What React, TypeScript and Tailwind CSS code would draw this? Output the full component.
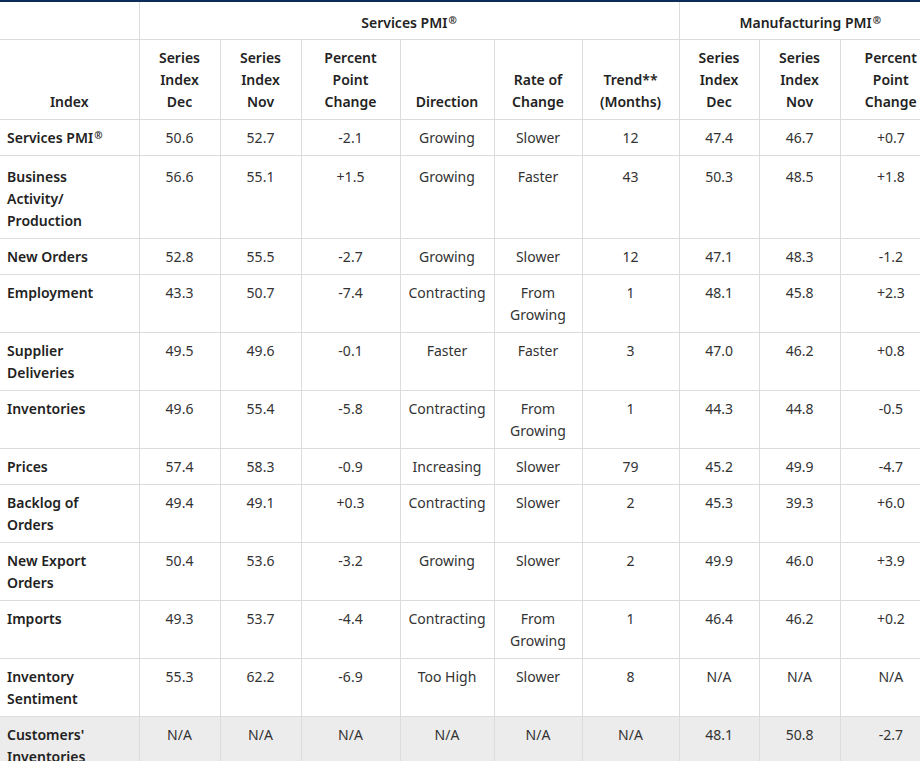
import React from 'react';

type Row = {
  label: React.ReactNode;
  cells: React.ReactNode[];
  shaded?: boolean;
  tall?: boolean;
};

const br = (a: string, b: string) => (
  <>
    {a}
    <br />
    {b}
  </>
);

const Reg = () => (
  <sup className="relative -top-[4px] ml-[1px] text-[10px] font-bold leading-[0]">®</sup>
);

const fromGrowing = br('From', 'Growing');

const rows: Row[] = [
  {
    label: (
      <>
        Services PMI<Reg />
      </>
    ),
    cells: ['50.6', '52.7', '-2.1', 'Growing', 'Slower', '12', '47.4', '46.7', '+0.7'],
  },
  {
    label: (
      <>
        Business
        <br />
        Activity/
        <br />
        Production
      </>
    ),
    cells: ['56.6', '55.1', '+1.5', 'Growing', 'Faster', '43', '50.3', '48.5', '+1.8'],
    tall: true,
  },
  { label: 'New Orders', cells: ['52.8', '55.5', '-2.7', 'Growing', 'Slower', '12', '47.1', '48.3', '-1.2'] },
  { label: 'Employment', cells: ['43.3', '50.7', '-7.4', 'Contracting', fromGrowing, '1', '48.1', '45.8', '+2.3'] },
  { label: br('Supplier', 'Deliveries'), cells: ['49.5', '49.6', '-0.1', 'Faster', 'Faster', '3', '47.0', '46.2', '+0.8'] },
  { label: 'Inventories', cells: ['49.6', '55.4', '-5.8', 'Contracting', fromGrowing, '1', '44.3', '44.8', '-0.5'] },
  { label: 'Prices', cells: ['57.4', '58.3', '-0.9', 'Increasing', 'Slower', '79', '45.2', '49.9', '-4.7'] },
  { label: br('Backlog of', 'Orders'), cells: ['49.4', '49.1', '+0.3', 'Contracting', 'Slower', '2', '45.3', '39.3', '+6.0'] },
  { label: br('New Export', 'Orders'), cells: ['50.4', '53.6', '-3.2', 'Growing', 'Slower', '2', '49.9', '46.0', '+3.9'] },
  { label: 'Imports', cells: ['49.3', '53.7', '-4.4', 'Contracting', fromGrowing, '1', '46.4', '46.2', '+0.2'] },
  { label: br('Inventory', 'Sentiment'), cells: ['55.3', '62.2', '-6.9', 'Too High', 'Slower', '8', 'N/A', 'N/A', 'N/A'] },
  {
    label: br("Customers'", 'Inventories'),
    cells: ['N/A', 'N/A', 'N/A', 'N/A', 'N/A', 'N/A', '48.1', '50.8', '-2.7'],
    shaded: true,
  },
];

const widths = [139, 81, 81, 99, 94, 88, 97, 80, 81, 101];

const subHeads: React.ReactNode[] = [
  <>Series<br />Index<br />Dec</>,
  <>Series<br />Index<br />Nov</>,
  <>Percent<br />Point<br />Change</>,
  'Direction',
  <>Rate of<br />Change</>,
  <>Trend**<br />(Months)</>,
  <>Series<br />Index<br />Dec</>,
  <>Series<br />Index<br />Nov</>,
  <>Percent<br />Point<br />Change</>,
];

export default function App() {
  return (
    <div
      className="w-[920px] h-[761px] overflow-hidden bg-white text-[14px] leading-[22px] text-[#333]"
      style={{ fontFamily: '"Noto Sans", "Open Sans", Arial, sans-serif' }}
    >
      <div className="w-[941px] border-t-2 border-[#0b2c57]">
        <table className="w-[941px] table-fixed border-collapse">
          <colgroup>
            {widths.map((w, i) => (
              <col key={i} style={{ width: w }} />
            ))}
          </colgroup>
          <thead>
            <tr>
              <th className="border-b border-[#dcdcdc] pt-[10px] pb-[5px]" />
              <th
                colSpan={6}
                className="border-b border-l border-[#dcdcdc] pt-[10px] pb-[5px] text-center font-semibold text-[#222]"
              >
                Services PMI<Reg />
              </th>
              <th
                colSpan={3}
                className="border-b border-l border-[#dcdcdc] pt-[10px] pb-[5px] text-center font-semibold text-[#222]"
              >
                Manufacturing PMI<Reg />
              </th>
            </tr>
            <tr>
              <th className="border-b border-[#dcdcdc] px-[7px] pt-[7px] pb-[6px] align-bottom text-center font-semibold text-[#222]">
                Index
              </th>
              {subHeads.map((h, i) => (
                <th
                  key={i}
                  className="border-b border-l border-[#dcdcdc] px-[4px] pt-[7px] pb-[6px] align-bottom text-center font-semibold text-[#222]"
                >
                  {h}
                </th>
              ))}
            </tr>
          </thead>
          <tbody>
            {rows.map((r, i) => {
              const pad = r.tall ? 'pt-[10px] pb-[6px]' : 'pt-[7px] pb-[6px]';
              return (
                <tr key={i} className={r.shaded ? 'bg-[#ececec]' : ''}>
                  <td
                    className={`border-b border-[#dcdcdc] pl-[7px] pr-[4px] align-top text-left font-semibold text-[#222] ${pad}`}
                  >
                    {r.label}
                  </td>
                  {r.cells.map((c, j) => (
                    <td
                      key={j}
                      className={`border-b border-l border-[#dcdcdc] px-[4px] align-top text-center ${pad}`}
                    >
                      {c}
                    </td>
                  ))}
                </tr>
              );
            })}
          </tbody>
        </table>
      </div>
    </div>
  );
}
